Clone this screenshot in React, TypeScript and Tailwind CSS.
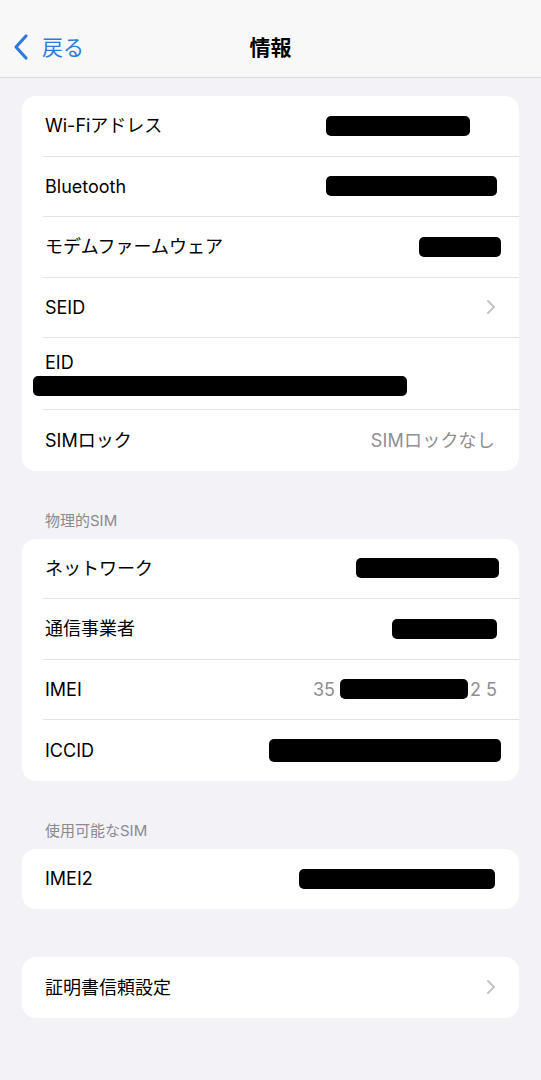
const jp = { fontFamily: '"Inter", "Noto Sans CJK JP", sans-serif' };

function Bar({ w, className = '' }: { w: number; className?: string }) {
  return <div className={`h-[20px] rounded-[5px] bg-black blur-[0.6px] ${className}`} style={{ width: w }} />;
}

function Chevron() {
  return (
    <svg width="10" height="16" viewBox="0 0 10 16" fill="none" className="mr-[1px]">
      <path d="M2 2l6 6-6 6" stroke="#c4c4c8" strokeWidth="2" strokeLinecap="round" strokeLinejoin="round" />
    </svg>
  );
}

function Row({ label, right, last }: { label: string; right?: React.ReactNode; last?: boolean }) {
  return (
    <div className={`ml-[21px] flex h-[60.5px] items-center justify-between pl-[2px] pr-[22px] ${last ? '' : 'border-b border-[#e3e3e6]'}`}>
      <span className="text-[18px] text-black">{label}</span>
      {right}
    </div>
  );
}

function Card({ children }: { children: React.ReactNode }) {
  return <div className="mx-[22px] overflow-hidden rounded-[14px] bg-white">{children}</div>;
}

function SectionTitle({ text }: { text: string }) {
  return <div className="px-[45px] pb-[8px] pt-[39px] text-[15px] leading-[21px] text-[#8a8a8e]">{text}</div>;
}

export default function App() {
  return (
    <div className="min-h-[1080px] w-[541px] bg-[#f2f2f7]" style={jp}>
      <div className="relative flex h-[78px] items-end border-b border-[#d9d9dc] bg-[#f8f8f8] pb-[14px]">
        <div className="flex items-center pl-[12px] text-[#2f7bd6]">
          <svg width="18" height="28" viewBox="0 0 18 28" fill="none">
            <path d="M14 3L4 14l10 11" stroke="#2f7bd6" strokeWidth="3.2" strokeLinecap="round" strokeLinejoin="round" />
          </svg>
          <span className="ml-[12px] text-[21px]">戻る</span>
        </div>
        <div className="absolute bottom-[14px] left-0 right-0 text-center text-[21px] font-bold text-black">情報</div>
      </div>

      <div className="pt-[18px]">
        <Card>
          <Row label="Wi-Fiアドレス" right={<Bar w={144} className="mr-[27px]" />} />
          <Row label="Bluetooth" right={<Bar w={171} />} />
          <Row label="モデムファームウェア" right={<Bar w={82} className="-mr-[4px]" />} />
          <Row label="SEID" right={<Chevron />} />
          <div className="ml-[21px] flex h-[72px] flex-col justify-center border-b border-[#e3e3e6] pl-[2px]">
            <span className="text-[18px] leading-[24px] text-black">EID</span>
            <Bar w={374} className="-ml-[12px] mt-[1px]" />
          </div>
          <Row label="SIMロック" last right={<span className="mr-[2px] text-[18px] tracking-[0.2px] text-[#8e8e93]">SIMロックなし</span>} />
        </Card>

        <SectionTitle text="物理的SIM" />
        <Card>
          <Row label="ネットワーク" right={<Bar w={143} className="-mr-[2px]" />} />
          <Row label="通信事業者" right={<Bar w={105} />} />
          <Row
            label="IMEI"
            right={
              <div className="flex items-center text-[18px] text-[#8e8e93]">
                <span>35</span>
                <Bar w={128} className="ml-[5px]" />
                <span className="ml-[2px]">2 5</span>
              </div>
            }
          />
          <Row label="ICCID" last right={<Bar w={232} className="-mr-[4px] h-[23px]" />} />
        </Card>

        <SectionTitle text="使用可能なSIM" />
        <Card>
          <Row label="IMEI2" last right={<Bar w={196} className="mr-[2px]" />} />
        </Card>

        <div className="h-[48px]" />
        <Card>
          <Row label="証明書信頼設定" last right={<Chevron />} />
        </Card>
      </div>
    </div>
  );
}
